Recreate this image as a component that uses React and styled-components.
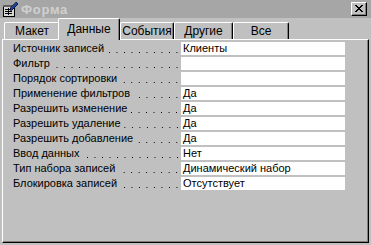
import React from 'react';
import styled, { createGlobalStyle } from 'styled-components';

const GlobalStyle = createGlobalStyle`
  html, body {
    margin: 0;
    padding: 0;
    background: #c0c0c0;
  }
  * {
    box-sizing: border-box;
  }
`;

// Window frame
const Window = styled.div`
  width: 371px;
  height: 245px;
  background: #c0c0c0;
  display: flex;
  flex-direction: column;
  font-family: 'Liberation Sans', Arial, sans-serif;
  font-size: 11px;
  color: #000;
  overflow: hidden;
`;

const TitleBar = styled.div`
  height: 18px;
  flex: none;
  background: #a6a6a6;
  display: flex;
  align-items: center;
  padding: 0 4px 0 2px;
  gap: 3px;
`;

const Title = styled.span`
  flex: 1;
  color: #d0d0d0;
  font-weight: bold;
  font-size: 13px;
  letter-spacing: 0.7px;
`;

const CloseButton = styled.div`
  width: 16px;
  height: 14px;
  background: #c0c0c0;
  border-top: 1px solid #fff;
  border-left: 1px solid #fff;
  border-right: 1px solid #000;
  border-bottom: 1px solid #000;
  box-shadow: inset -1px -1px 0 #808080;
  display: flex;
  align-items: center;
  justify-content: center;
  padding-right: 1px;
  padding-bottom: 1px;
`;

// Tabs
const TabRow = styled.div`
  height: 21px;
  flex: none;
  display: flex;
  align-items: flex-end;
  padding-left: 4px;
  position: relative;
  z-index: 1;
`;

const Tab = styled.div`
  width: ${p => p.$w}px;
  height: ${p => (p.$active ? 22 : 17)}px;
  margin: ${p => (p.$active ? '0 0 -1px -2px' : '0')};
  background: #c0c0c0;
  border-top: 1px solid #fff;
  border-left: 1px solid #fff;
  border-right: 1px solid #000;
  border-top-left-radius: 2px;
  border-top-right-radius: 2px;
  box-shadow: inset -1px 0 0 #808080;
  display: flex;
  align-items: center;
  justify-content: center;
  padding-bottom: ${p => (p.$active ? 2 : 0)}px;
  font-size: 12px;
  white-space: nowrap;
  z-index: ${p => (p.$active ? 2 : 1)};
`;

// Property sheet panel
const Panel = styled.div`
  flex: 1;
  margin: 0 2px 2px 2px;
  border-top: 1px solid #fff;
  border-left: 1px solid #fff;
  border-right: 1px solid #000;
  border-bottom: 1px solid #000;
  box-shadow: inset -1px -1px 0 #808080;
  padding: 2px 0 0 0;
  display: flex;
  flex-direction: column;
`;

const Row = styled.div`
  display: grid;
  grid-template-columns: 178px 164px;
  height: 15px;
`;

const Label = styled.div`
  padding-left: 10px;
  height: 13px;
  line-height: 13px;
  white-space: nowrap;
  display: flex;
`;

// dotted leader, dots sit on a fixed 7.5px grid ending at the same x on every row
const Dots = styled.div`
  flex: 1;
  margin-left: 3px;
  background-image: linear-gradient(to right, #000 1px, transparent 1px);
  background-size: 7.5px 1px;
  background-repeat: repeat-x;
  background-position: right 2.5px top 10px;
  margin-right: 2px;
`;

const Field = styled.div`
  background: #fff;
  height: 13px;
  line-height: 13px;
  padding-left: 2px;
  white-space: nowrap;
  overflow: hidden;
`;

const FormIcon = () => (
  <svg width="16" height="16" viewBox="0 0 16 16" shapeRendering="crispEdges">
    <rect x="1" y="4" width="11" height="11" fill="#d8d8d8" stroke="#000" />
    <rect x="1" y="4" width="11" height="2" fill="#606060" />
    <line x1="3" y1="8" x2="10" y2="8" stroke="#000" />
    <line x1="3" y1="10" x2="10" y2="10" stroke="#000" />
    <line x1="3" y1="12" x2="10" y2="12" stroke="#000" />
    <line x1="6" y1="7" x2="6" y2="14" stroke="#000" />
    <polygon points="8,7 14,1 16,3 10,9 8,9" fill="#2040a0" stroke="#000" strokeWidth="0.6" />
  </svg>
);

const CloseGlyph = () => (
  <svg width="8" height="7" viewBox="0 0 8 7" shapeRendering="crispEdges">
    <path d="M0 0h2v1h-2zM6 0h2v1h-2zM1 1h2v1h-2zM5 1h2v1h-2zM2 2h4v1h-4zM3 3h2v1h-2zM2 4h4v1h-4zM1 5h2v1h-2zM5 5h2v1h-2zM0 6h2v1h-2zM6 6h2v1h-2z" fill="#000" />
  </svg>
);

const tabs = [
  { name: 'Макет', w: 56 },
  { name: 'Данные', w: 62, active: true },
  { name: 'События', w: 54 },
  { name: 'Другие', w: 59 },
  { name: 'Все', w: 56 },
];

const rows = [
  ['Источник записей', 'Клиенты'],
  ['Фильтр', ''],
  ['Порядок сортировки', ''],
  ['Применение фильтров', 'Да'],
  ['Разрешить изменение', 'Да'],
  ['Разрешить удаление', 'Да'],
  ['Разрешить добавление', 'Да'],
  ['Ввод данных', 'Нет'],
  ['Тип набора записей', 'Динамический набор'],
  ['Блокировка записей', 'Отсутствует'],
];

const App = () => {
  return (
    <>
      <GlobalStyle />
      <Window>
        <TitleBar>
          <FormIcon />
          <Title>Форма</Title>
          <CloseButton>
            <CloseGlyph />
          </CloseButton>
        </TitleBar>

        <TabRow>
          {tabs.map(t => (
            <Tab key={t.name} $w={t.w} $active={t.active}>
              {t.name}
            </Tab>
          ))}
        </TabRow>

        <Panel>
          {rows.map(([label, value]) => (
            <Row key={label}>
              <Label>
                {label}
                <Dots />
              </Label>
              <Field>{value}</Field>
            </Row>
          ))}
        </Panel>
      </Window>
    </>
  );
};

export default App;
